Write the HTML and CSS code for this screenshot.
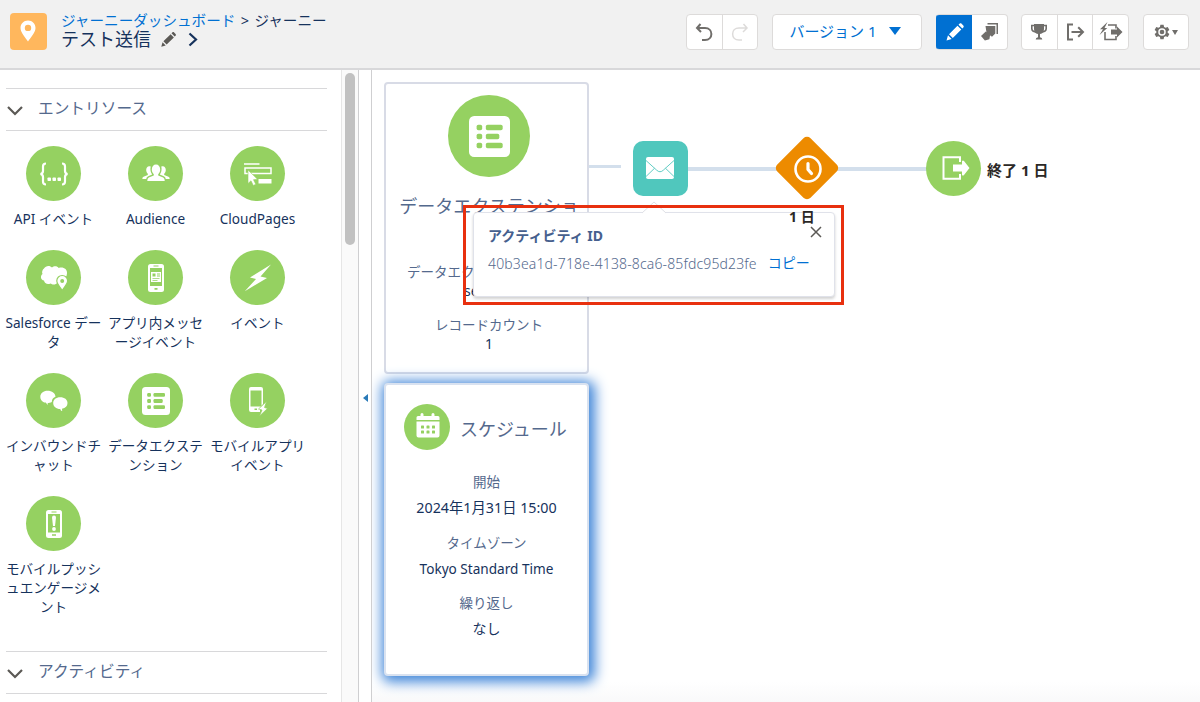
FILE: index.html
```html
<!DOCTYPE html>
<html lang="ja">
<head>
<meta charset="utf-8">
<title>ジャーニー</title>
<link rel="stylesheet" href="styles.css">
</head>
<body>
<svg class="defs" aria-hidden="true">
  <symbol id="list" viewBox="0 0 28 28">
    <rect width="28" height="28" rx="3.500" fill="#fff"/>
    <g fill="#95d161"><rect x="5.200" y="6" width="3.800" height="3.800" rx="1.200"/><rect x="5.200" y="12.100" width="3.800" height="3.800" rx="1.200"/><rect x="5.200" y="18.200" width="3.800" height="3.800" rx="1.200"/><rect x="11.500" y="6" width="11.500" height="3.800" rx="1.200"/><rect x="11.500" y="12.100" width="9.200" height="3.800" rx="1.200"/><rect x="11.500" y="18.200" width="11.500" height="3.800" rx="1.200"/></g>
  </symbol>
  <symbol id="pencil" viewBox="0 0 20 20">
    <path d="M1.500 18.500l1.500-5.200 3.700 3.700zM4 12.200l8.500-8.500 3.800 3.800L7.800 16zM13.500 2.700l1-1c.6-.6 1.500-.6 2.100 0l1.700 1.700c.6.6.6 1.500 0 2.100l-1 1z"/>
  </symbol>
</svg>
<header class="topbar">
  <div class="app-icon"><svg width="36" height="36" viewBox="0 0 36 36"><path fill="#fff" fill-rule="evenodd" d="M18 7.500c-4.300 0-7.500 3.300-7.500 7.400 0 4.800 5 9.500 7.500 13.600 2.500-4.100 7.500-8.800 7.500-13.600 0-4.100-3.200-7.400-7.500-7.400zm0 4.200a3.200 3.200 0 1 1 0 6.400 3.200 3.200 0 0 1 0-6.400z"/></svg></div>
  <div class="titles">
    <div class="crumbs"><a>ジャーニーダッシュボード</a><span class="sep">&gt;</span><span>ジャーニー</span></div>
    <div class="name"><span>テスト送信</span>
      <svg class="edit" width="17" height="17"><use href="#pencil" fill="#5b5955"/></svg>
      <svg width="10" height="15" viewBox="0 0 10 15"><path d="M1.500 1.500l6.500 6-6.500 6" fill="none" stroke="#16325c" stroke-width="2.200"/></svg>
    </div>
  </div>
  <div class="tools">
    <div class="group undo">
      <button><svg width="20" height="20" viewBox="0 0 20 20" fill="none" stroke="#706e6b" stroke-width="2"><path d="M6.500 2L3 6l4 4M3.200 6H11c8.500 0 8.500 12 0 12H8"/></svg></button>
      <button><svg width="20" height="20" viewBox="0 0 20 20" fill="none" stroke="#dddbda" stroke-width="1.500"><path d="M13.500 2L17 6l-4 4M17 6H9c-8.500 0-8.500 12 0 12h3"/></svg></button>
    </div>
    <div class="group version"><button><span>バージョン 1</span><i class="caret"></i></button></div>
    <div class="group modes">
      <button class="on"><svg width="20" height="20"><use href="#pencil" fill="#fff"/></svg></button>
      <button><svg width="20" height="20" viewBox="0 0 20 20"><path fill="#706e6b" d="M7.500 1H18v11h-1.500V2.500h-9zM5.500 4H15.300v7.500l-3.300 3.300-5.500-4z"/><path fill="#706e6b" d="M5.800 9.500l4.400 3-.8 4.700-4.500 1.300L1 14z"/></svg></button>
    </div>
    <div class="group goals">
      <button><svg width="20" height="20" viewBox="0 0 20 20"><path d="M6 3.500H2.800v3q0 3 4 3.500M14 3.500h3.200v3q0 3-4 3.500" fill="none" stroke="#706e6b" stroke-width="1.600"/><path fill="#706e6b" d="M5 2h10v5q0 4.300-4 5v3.200q2.300.3 2.300 2.300H6.700q0-2 2.300-2.300V12Q5 11.300 5 7z"/></svg></button>
      <button><svg width="20" height="20" viewBox="0 0 20 20" fill="none" stroke="#706e6b" stroke-width="2"><path d="M8 2.500H3v15h5M6.500 10h11M13.200 5.200L18 10l-4.800 4.800"/></svg></button>
      <button><svg width="24" height="20" viewBox="0 0 24 20"><path d="M9 3h8v3.500M17 14v3.500H6V10" fill="none" stroke="#706e6b" stroke-width="1.600"/><path fill="#706e6b" d="M12 7.500h6V4.500l5.500 5.500-5.500 5.500v-3h-6zM8.500 0L1 7.200h3L.5 13 8.300 6H5.500z"/></svg></button>
    </div>
    <div class="group settings"><button><svg width="16" height="16" viewBox="0 0 20 20"><path fill="#706e6b" fill-rule="evenodd" d="M8 1h4l.6 2.700 1.900 1.100 2.700-.9 2 3.500L17.100 9v2l2.100 1.600-2 3.500-2.700-.9-1.900 1.100L12 19H8l-.6-2.700-1.900-1.100-2.700.9-2-3.500L2.900 11V9L.8 7.400l2-3.500 2.700.9 1.900-1.100zM10 5.300a4.700 4.700 0 1 0 0 9.400 4.700 4.700 0 0 0 0-9.400z"/><circle cx="10" cy="10" r="2.900" fill="#706e6b"/></svg><i class="caret small"></i></button></div>
  </div>
</header>
<main class="workspace">
  <aside class="sidebar">
    <div class="palette">
      <h2 class="section"><svg width="16" height="10" viewBox="0 0 16 10"><path d="M1 1l7 7 7-7" fill="none" stroke="#5b5955" stroke-width="2.200"/></svg><span>エントリソース</span></h2>
      <div class="grid">
        <div class="item"><div class="disc"><svg width="28" height="24" viewBox="0 0 28 24"><path d="M6 1.500Q3 1.500 3 4.500V9q0 2.500-2.500 3Q3 12.500 3 15v4.500q0 3 3 3M22 1.500q3 0 3 3V9q0 2.500 2.500 3-2.500.5-2.500 3v4.500q0 3-3 3" fill="none" stroke="#fff" stroke-width="2.200"/><g fill="#fff"><rect x="7.500" y="15.500" width="3.500" height="3.500" rx=".8"/><rect x="12.500" y="15.500" width="3.500" height="3.500" rx=".8"/><rect x="17.500" y="15.500" width="3.500" height="3.500" rx=".8"/></g></svg></div><p>API イベント</p></div>
        <div class="item"><div class="disc"><svg class="lift2" width="28" height="18" viewBox="0 0 28 18" fill="#fff"><path d="M9.800 5.500C9.800 2.500 11.500.5 14 .5s4.200 2 4.200 5c0 2-.9 3.800-2 4.700v1.300l5 2q1.500.8 1.500 3v.5H5.300v-.5q0-2.200 1.500-3l5-2v-1.300c-1.100-.9-2-2.700-2-4.700z"/><path d="M8.700 2.500C6 1.500 4 3.500 4.200 6.300c.1 1.500.7 2.800 1.600 3.400v1.200L1.500 12.700Q.3 13.300.3 15h3.900q.3-2 2-2.800l4-1.700C8.600 8.500 8 5.500 8.700 2.500zM19.300 2.500c2.700-1 4.700 1 4.500 3.800-.1 1.500-.7 2.800-1.600 3.400v1.200l4.300 1.800q1.200.6 1.200 2.300h-3.900q-.3-2-2-2.800l-4-1.700c1.600-2 2.200-5 1.500-8z"/></svg></div><p>Audience</p></div>
        <div class="item"><div class="disc"><svg width="28" height="24" viewBox="0 0 28 24"><path d="M0 2h15.500M1 6h26v5.500H1z" fill="none" stroke="#fff" stroke-width="1.500"/><path fill="#fff" d="M14.500 17h13v4.500h-13z"/><path fill="#fff" stroke="#95d161" stroke-width=".6" d="M4 8v13.500l3-2.700 2.300 4.700 2.500-1.200-2.300-4.600 4-.4z"/></svg></div><p>CloudPages</p></div>
        <div class="item"><div class="disc"><svg width="28" height="26" viewBox="0 0 28 26"><path fill="#fff" d="M4 3.500C5.500.5 10 0 12 2.500c2-2 5.500-1.500 6.700.5C23 1.500 27.500 4 27 8.500c-.2 3.500-2 5.500-5 6.500-2 0-4 1-4.500 2.500-2 3-5.500 2-7 1-3 1.500-6 0-6.500-3C.5 15 0 11 2.500 9 1.500 7 2.500 4.500 4 3.500z"/><path fill="#fff" stroke="#95d161" stroke-width="1.200" d="M22.200 10.500c-3 0-5.400 2.300-5.400 5.300 0 3.600 3.700 6.400 5.400 9.800 1.700-3.400 5.400-6.200 5.400-9.800 0-3-2.400-5.300-5.400-5.300z"/><circle cx="22.200" cy="16" r="2" fill="#95d161"/></svg></div><p>Salesforce デー<br>タ</p></div>
        <div class="item"><div class="disc"><svg width="16" height="28" viewBox="0 0 16 28"><rect width="16" height="28" rx="2.500" fill="#fff"/><path fill="#95d161" d="M2 4h12v18H2zM5.500 1.500h5v1h-5zM6.500 24h3v1.800h-3z"/><path fill="#fff" d="M3 8h10v10H3z"/><path fill="#95d161" d="M4.500 9.500h3v3h-3zM9 9.500h3v1H9zM9 11.500h3v1H9zM4.500 14h7v.8h-7zM4.500 16h5v.8h-5z"/></svg></div><p>アプリ内メッセ<br>ージイベント</p></div>
        <div class="item"><div class="disc"><svg width="28" height="28" viewBox="0 0 28 28"><path fill="#fff" d="M27 .5L6 13.500l6 1.500L.8 27.200 23 14l-6.500-1.500z"/></svg></div><p>イベント</p></div>
        <div class="item"><div class="disc"><svg width="28" height="22" viewBox="0 0 28 22" fill="#fff"><path d="M7.500.8C3.500.8.3 3.300.3 7c0 2.500 1.500 4.500 3.900 5.500l1.500 0 2 2.500 0-2c.8 0 3 0 4.100-.9 0-3 1.700-4.500 3.700-5.300C15.300 3.300 12 .8 7.500.8z"/><path d="M20.200 7.300c-4.200 0-7 2.300-7 5.800s3 6 7 6c.8 2 1.500 2 2 2l-.2-2.300c3.500-.5 5.500-2.500 5.500-5.700 0-3.500-3-5.800-7.300-5.800z"/></svg></div><p>インバウンドチ<br>ャット</p></div>
        <div class="item"><div class="disc"><svg width="28" height="28"><use href="#list"/></svg></div><p>データエクステ<br>ンション</p></div>
        <div class="item"><div class="disc"><svg width="20" height="30" viewBox="0 0 20 30"><path fill="#fff" fill-rule="evenodd" d="M3 1h10q2 0 2 2v15l-3 4v4H3q-2 0-2-2V3q0-2 2-2zm-.5 3.500v16h11v-16zM6.500 22.500v1.500h2.500v-1.500z"/><path fill="#fff" stroke="#95d161" stroke-width=".7" d="M18.500 15.500l-8 7.500 3.500 1-2.500 6 8-7.500-3-1z"/></svg></div><p>モバイルアプリ<br>イベント</p></div>
        <div class="item"><div class="disc"><svg width="16" height="28" viewBox="0 0 16 28"><rect width="16" height="28" rx="2.500" fill="#fff"/><path fill="#95d161" d="M2 4h12v18.500H2zM5.500 1.500h5v1h-5zM6 24.200h4v1.500H6z"/><path fill="#fff" d="M6 7.500q0-2 2-2t2 2l-1 8.500H7z"/><circle cx="8" cy="19" r="1.900" fill="#fff"/></svg></div><p>モバイルプッシ<br>ュエンゲージメ<br>ント</p></div>
      </div>
      <h2 class="section"><svg width="16" height="10" viewBox="0 0 16 10"><path d="M1 1l7 7 7-7" fill="none" stroke="#5b5955" stroke-width="2.200"/></svg><span>アクティビティ</span></h2>
    </div>
    <div class="track"><div class="thumb"></div></div>
    <div class="splitter"><i></i></div>
  </aside>
  <section class="canvas">
    <div class="card source">
      <div class="disc big"><svg width="41" height="41"><use href="#list"/></svg></div>
      <h3>データエクステンショ</h3>
      <div class="field"><span>データエク</span><b>se</b></div>
      <div class="count"><span>レコードカウント</span><b>1</b></div>
    </div>
    <div class="card schedule">
      <div class="head"><div class="disc mid"><svg width="24" height="25" viewBox="0 0 24 25"><path fill="#fff" d="M2 3h2.500V1.500q0-1.500 1.500-1.500t1.500 1.500V3h8V1.500Q15.500 0 17 0t1.500 1.500V3H22q1.500 0 1.500 1.500V7H.5V4.500Q.5 3 2 3zM.5 8.500h23V22.500q0 2-2 2h-19q-2 0-2-2z"/><g fill="#95d161"><rect x="5" y="12.500" width="3" height="3" rx=".6"/><rect x="10.500" y="12.500" width="3" height="3" rx=".6"/><rect x="16" y="12.500" width="3" height="3" rx=".6"/><rect x="5" y="17.500" width="3" height="3" rx=".6"/><rect x="10.500" y="17.500" width="3" height="3" rx=".6"/><rect x="16" y="17.500" width="3" height="3" rx=".6"/></g></svg></div><h3>スケジュール</h3></div>
      <dl><dt>開始</dt><dd class="date">2024年1月31日 15:00</dd><dt>タイムゾーン</dt><dd class="zone">Tokyo Standard Time</dd><dt>繰り返し</dt><dd>なし</dd></dl>
    </div>
    <i class="wire w1"></i><i class="wire w2"></i><i class="wire w3"></i>
    <div class="node mail"><svg width="28" height="22" viewBox="0 0 28 22"><rect width="28" height="22" rx="2" fill="#fff"/><path d="M0 3.500l10.500 9.500q3.500 3.500 7 0L28 3.500M0 19.500l8.500-8.200M28 19.500l-8.500-8.200" fill="none" stroke="#50c7bd" stroke-width=".9"/></svg></div>
    <div class="node wait"><svg width="64" height="64" viewBox="0 0 64 64"><rect x="8.500" y="8.500" width="47" height="47" rx="5" transform="rotate(45 32 32)" fill="#ed8b00"/><circle cx="33" cy="33" r="12.500" fill="none" stroke="#fff" stroke-width="2.600"/><path d="M33 27.500v6l3.500 4" fill="none" stroke="#fff" stroke-width="3.200" stroke-linecap="round" stroke-linejoin="round"/></svg></div>
    <div class="node exit disc"><svg width="28" height="24" viewBox="0 0 28 24"><path d="M18 6V1.200H1.500v21.600H18V18" fill="none" stroke="#fff" stroke-width="2"/><path fill="#fff" d="M11 8.500h9V5q1-1 2 0l5.500 7-5.500 7q-1 1-2 0v-3.500h-9z"/></svg></div>
    <div class="node end-label">終了 1 日</div>
    <div class="popover">
      <svg class="tip" width="28" height="13" viewBox="0 0 28 13"><path d="M2 12L14 1l12 11" fill="#fff" stroke="#dfe0e6"/></svg>
      <svg class="close" width="12" height="12" viewBox="0 0 12 12"><path d="M1 1l10 10M11 1L1 11" stroke="#5b5955" stroke-width="1.500"/></svg>
      <strong>アクティビティ ID</strong>
      <div class="row"><span class="uuid">40b3ea1d-718e-4138-8ca6-85fdc95d23fe</span><a>コピー</a></div>
    </div>
    <div class="node wait-label">1 日</div>
    <div class="highlight"></div>
  </section>
</main>
</body>
</html>
```
FILE: styles.css
```css
* { box-sizing: border-box; }
body { margin: 0; width: 1200px; height: 702px; overflow: hidden; display: flex; flex-direction: column; background: #fff; color: #16325c; font: 14px/19px "Noto Sans", "Noto Sans CJK JP", sans-serif; }
h2, h3, p, dl, dd { margin: 0; font-weight: 400; }
svg { display: block; flex: none; }
a { color: #0070d2; }
b { font-weight: 400; }
.defs { position: absolute; width: 0; height: 0; }

.topbar { height: 70px; flex: none; display: flex; background: #f1f1f1; border-bottom: 2px solid #d8d8da; padding: 0 11px 0 10px; }
.app-icon { width: 37px; height: 37px; margin-top: 13px; border-radius: 4px; background: #ffb75d; overflow: hidden; }
.titles { margin: 10px 0 0 14px; white-space: nowrap; }
.crumbs { font-size: 14.600px; line-height: 20px; height: 19px; display: flex; }
.sep { width: 19px; text-align: center; }
.name { display: flex; align-items: center; font-size: 18px; line-height: 20px; height: 20px; }
.edit { margin: 0 11px 0 9px; }
.tools { margin: 14px 0 0 auto; display: flex; }
.group { height: 36px; display: flex; border: 1px solid #dddbda; border-radius: 4px; background: #fff; overflow: hidden; }
.group button { flex: 1; display: flex; align-items: center; justify-content: center; border: 0; padding: 0; background: none; color: #0070d2; font: inherit; font-size: 15px; }
.group button + button { border-left: 1px solid #dddbda; }
.group .on { background: #0070d2; }
.group .on + button { border-left: 0; }
.undo { width: 72px; margin-right: 14px; }
.version { width: 150px; margin-right: 14px; }
.version button { padding: 0 4px 2px 0; }
.modes { width: 72px; margin-right: 13px; border-left-color: #0070d2; background: linear-gradient(90deg, #0070d2 50%, #fff 50%); }
.goals { width: 108px; margin-right: 14px; }
.settings { width: 46px; }
.caret { border: 6px solid transparent; border-top: 8px solid #0070d2; border-bottom: 0; margin-left: 12px; }
.caret.small { border-width: 5px 3.500px 0; border-top-color: #706e6b; margin-left: 2px; }

.workspace { flex: 1; min-height: 0; display: flex; }
.sidebar { width: 372px; flex: none; display: flex; }
.palette { width: 341px; padding: 18px 14px 0 6px; overflow: hidden; }
.section { height: 43px; border-top: 1px solid #d8d8da; border-bottom: 1px solid #d8d8da; display: flex; align-items: center; gap: 15px; padding-left: 1px; color: #54698d; font-size: 15.700px; line-height: 20px; }
.section svg { margin-top: 2px; }
.section span { margin-top: -4px; }
.grid { display: grid; grid-template-columns: repeat(3, 102px); margin: 15px 0 0 -3.500px; row-gap: 21px; height: 505px; align-content: start; }
.item { text-align: center; white-space: nowrap; }
.item p { margin: 8px 0 1px; font-size: 13.600px; }
.disc { width: 55px; height: 55px; margin: 0 auto; border-radius: 50%; background: #95d161; display: flex; align-items: center; justify-content: center; }
.lift2 { margin-top: -2px; }
.track { width: 18px; background: #fafafa; border-left: 1px solid #e6e6e6; border-right: 1px solid #cfcfd1; padding: 3px 3px 0; }
.thumb { width: 10px; height: 172px; border-radius: 5px; background: #c1c1c1; }
.splitter { width: 13px; border-right: 1px solid #cfcfd1; padding: 324px 0 0 4px; }
.splitter i { display: block; width: 0; border: 4px solid transparent; border-left: 0; border-right: 5px solid #2a7ab8; }

.canvas { flex: 1; position: relative; overflow: hidden; background: linear-gradient(#fff 612px, #f9f9fa); }
.card { position: absolute; left: 12px; width: 205px; border: 2px solid #d8dbe6; border-radius: 4px; background: #fff; text-align: center; white-space: nowrap; color: #16325c; }
.card h3 { color: #54698d; font-size: 18px; line-height: 24px; }
.card dt, .count span, .field span { color: #54698d; font-size: 13.500px; }
.source { top: 12px; height: 292px; padding: 11px 0 0 5px; }
.big { width: 82px; height: 82px; }
.source h3 { margin-top: 17px; }
.field { height: 38px; margin-top: 45px; padding-left: 16px; text-align: left; display: flex; flex-direction: column; }
.field b { padding-left: 57px; line-height: 17px; }
.count { margin-top: 15px; display: flex; flex-direction: column; }
.count b { line-height: 17px; }
.schedule { top: 313px; height: 293px; padding-top: 19px; border-color: #d9e2f0; box-shadow: 2px 2px 13px 4px #3f85d8; }
.head { display: flex; align-items: center; padding-left: 18px; gap: 10px; }
.mid { width: 46px; height: 46px; margin: 0; }
.mid svg { margin: -4px 0 0 2px; }
.head h3 { margin-top: 3px; }
.schedule dl { margin-top: 21px; }
.schedule dt { height: 22px; line-height: 22px; }
.schedule dd { height: 38.500px; line-height: 29px; }
.schedule .date { font-size: 14.300px; }
.schedule .zone { font-size: 13.600px; }

.wire { position: absolute; height: 4px; background: #d3dfec; }
.w1 { left: 217px; top: 95px; width: 32px; height: 3px; }
.w2 { left: 315px; top: 97px; width: 90px; }
.w3 { left: 464px; top: 97px; width: 92px; }
.node { position: absolute; color: #2b2826; font-weight: 700; white-space: nowrap; }
.mail { left: 260.500px; top: 70.500px; width: 55px; height: 55px; border-radius: 10px; background: #50c7bd; display: flex; align-items: center; justify-content: center; }
.wait { left: 402.500px; top: 66px; }
.exit { left: 553.500px; top: 70.500px; padding-left: 6px; }
.end-label { left: 615px; top: 90px; font-size: 15px; line-height: 20px; }
.wait-label { left: 417px; top: 137px; font-size: 14px; }
.popover { position: absolute; left: 101px; top: 142px; width: 362px; height: 85px; padding: 14px 0 0 14px; border: 1px solid #e0e2ea; border-radius: 4px; background: #fff; box-shadow: 0 2px 3px rgba(0, 0, 0, .18); color: #54698d; white-space: nowrap; }
.popover strong { display: block; font-size: 14px; line-height: 18px; color: #46608e; }
.row { display: flex; gap: 11px; margin-top: 9px; line-height: 20px; }
.uuid { font-weight: 300; letter-spacing: .14px; }
.row a { margin-top: -1px; }
.tip { position: absolute; left: 166px; top: -12px; }
.close { position: absolute; right: 12px; top: 13px; }
.highlight { position: absolute; left: 91px; top: 135px; width: 381px; height: 100px; border: 3px solid #e8300f; }
```
